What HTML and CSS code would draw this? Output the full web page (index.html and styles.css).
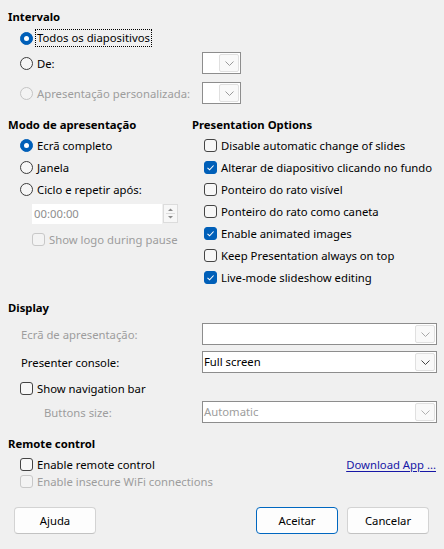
FILE: index.html
```html
<!DOCTYPE html>
<html lang="pt">
<head>
<meta charset="utf-8">
<link rel="stylesheet" href="styles.css">
</head>
<body>
<div class="dlg">
  <div class="title">Intervalo</div>
  <div class="srow r1">
    <label class="opt"><span class="radio on"></span><span class="focus">Todos os diapositivos</span></label>
  </div>
  <div class="srow r2">
    <label class="opt"><span class="radio"></span>De:</label>
    <div class="combo small"><span class="cbtn"><svg width="9" height="5" viewBox="0 0 9 5"><path d="M0.5 0.5 L4.5 4.5 L8.5 0.5" fill="none" stroke="#9a9a9a" stroke-width="1"/></svg></span></div>
  </div>
  <div class="srow r3">
    <label class="opt dis"><span class="radio off-dis"></span>Apresentação personalizada:</label>
    <div class="combo small"><span class="cbtn"><svg width="9" height="5" viewBox="0 0 9 5"><path d="M0.5 0.5 L4.5 4.5 L8.5 0.5" fill="none" stroke="#9a9a9a" stroke-width="1"/></svg></span></div>
  </div>

  <div class="cols">
    <div class="col left">
      <div class="title">Modo de apresentação</div>
      <label class="opt row22"><span class="radio on"></span>Ecrã completo</label>
      <label class="opt row22"><span class="radio"></span>Janela</label>
      <label class="opt row22"><span class="radio"></span>Ciclo e repetir após:</label>
      <div class="spin">
        <span class="spinfield">00:00:00</span>
        <span class="spinbtns">
          <svg width="15" height="19" viewBox="0 0 15 19"><path d="M5 7 L7.5 4.5 L10 7 Z" fill="#8a8a8a"/><path d="M5 12 L7.5 14.5 L10 12 Z" fill="#8a8a8a"/><path d="M3 9.5 H12" stroke="#dcdcdc" stroke-width="1"/></svg>
        </span>
      </div>
      <label class="opt dis logo"><span class="check dis"></span>Show logo during pause</label>
    </div>
    <div class="col right">
      <div class="title">Presentation Options</div>
      <label class="opt row22"><span class="check"></span>Disable automatic change of slides</label>
      <label class="opt row22"><span class="check on"><svg width="13" height="13" viewBox="0 0 13 13"><path d="M3.5 6.8 L5.6 8.8 L9.6 4.5" fill="none" stroke="#fff" stroke-width="1.1"/></svg></span>Alterar de diapositivo clicando no fundo</label>
      <label class="opt row22"><span class="check"></span>Ponteiro do rato visível</label>
      <label class="opt row22"><span class="check"></span>Ponteiro do rato como caneta</label>
      <label class="opt row22"><span class="check on"><svg width="13" height="13" viewBox="0 0 13 13"><path d="M3.5 6.8 L5.6 8.8 L9.6 4.5" fill="none" stroke="#fff" stroke-width="1.1"/></svg></span>Enable animated images</label>
      <label class="opt row22"><span class="check"></span>Keep Presentation always on top</label>
      <label class="opt row22"><span class="check on"><svg width="13" height="13" viewBox="0 0 13 13"><path d="M3.5 6.8 L5.6 8.8 L9.6 4.5" fill="none" stroke="#fff" stroke-width="1.1"/></svg></span>Live-mode slideshow editing</label>
    </div>
  </div>

  <div class="title t-display">Display</div>
  <div class="drow d1">
    <span class="dlabel dis">Ecrã de apresentação:</span>
    <div class="combo wide"><span class="cval"></span><span class="cbtn"><svg width="9" height="5" viewBox="0 0 9 5"><path d="M0.5 0.5 L4.5 4.5 L8.5 0.5" fill="none" stroke="#a8a8a8" stroke-width="1"/></svg></span></div>
  </div>
  <div class="drow d2">
    <span class="dlabel">Presenter console:</span>
    <div class="combo wide"><span class="cval">Full screen</span><span class="cbtn"><svg width="9" height="5" viewBox="0 0 9 5"><path d="M0.5 0.5 L4.5 4.5 L8.5 0.5" fill="none" stroke="#444" stroke-width="1"/></svg></span></div>
  </div>
  <label class="opt navrow"><span class="check"></span>Show navigation bar</label>
  <div class="drow d4">
    <span class="dlabel dis indent">Buttons size:</span>
    <div class="combo wide"><span class="cval dis">Automatic</span><span class="cbtn"><svg width="9" height="5" viewBox="0 0 9 5"><path d="M0.5 0.5 L4.5 4.5 L8.5 0.5" fill="none" stroke="#b0b0b0" stroke-width="1"/></svg></span></div>
  </div>

  <div class="title t-remote">Remote control</div>
  <div class="rrow">
    <label class="opt"><span class="check"></span>Enable remote control</label>
    <a class="link" href="#">Download App ...</a>
  </div>
  <div class="rrow r-second">
    <label class="opt dis"><span class="check dis"></span>Enable insecure WiFi connections</label>
  </div>

  <div class="buttons">
    <button class="btn">Ajuda</button>
    <span class="spacer"></span>
    <button class="btn def">Aceitar</button>
    <button class="btn">Cancelar</button>
  </div>
</div>
</body>
</html>
```

FILE: styles.css
```css
* { box-sizing: border-box; }
html, body { margin: 0; padding: 0; }
body {
  background: #f0f0f0;
  font-family: "Noto Sans", "Open Sans", sans-serif;
  font-size: 11.3px;
  color: #000;
  width: 444px;
  height: 549px;
  overflow: hidden;
}
.dlg { padding: 8px 8px 0 8px; }
.title {
  font-weight: bold;
  height: 18px;
  line-height: 18px;
}
.opt {
  display: flex;
  align-items: center;
  gap: 4px;
  white-space: nowrap;
}
.dis { color: #9d9d9d; }

/* radio */
.radio {
  width: 13px; height: 13px;
  border-radius: 50%;
  border: 1px solid #3c3c3c;
  background: #f6f6f6;
  flex: none;
  position: relative;
}
.radio.on { background: #005fb8; border-color: #005fb8; }
.radio.on::after {
  content: "";
  position: absolute;
  left: 3px; top: 3px;
  width: 5px; height: 5px;
  border-radius: 50%;
  background: #fff;
}
.radio.off-dis { border-color: #c4c4c4; background: #f3f3f3; }

/* checkbox */
.check {
  width: 13px; height: 13px;
  border-radius: 3px;
  border: 1px solid #444;
  background: #f7f7f7;
  flex: none;
  display: flex;
}
.check svg { margin: -1px; }
.check.on { background: #005fb8; border-color: #005fb8; }
.check.dis { border-color: #c8c8c8; background: #f3f3f3; }

.focus { outline: 1px dotted #000; outline-offset: 0; padding: 0 1px; line-height: 16px; margin-left: -1px; }

/* section 1 rows */
.srow {
  display: grid;
  grid-template-columns: 182px 39px;
  padding-left: 12px;
  height: 22px;
  align-items: center;
}
.r1 { margin-top: 1px; }
.r2 { margin-top: 3px; }
.r3 { margin-top: 8px; }

/* combo */
.combo {
  height: 22px;
  border: 1px solid #8d8d8d;
  background: #fff;
  display: flex;
  align-items: stretch;
}
.combo .cval {
  flex: 1;
  padding-left: 1px;
  line-height: 20px;
}
.combo.small { justify-content: flex-end; }
.cbtn {
  width: 20px;
  margin: 1px;
  border: 1px solid #e0e0e0;
  background: #f9f9f9;
  border-radius: 2px;
  display: flex;
  align-items: center;
  justify-content: center;
  flex: none;
}

/* section 2 */
.cols {
  display: grid;
  grid-template-columns: 184px 1fr;
  margin-top: 12px;
}
.col { display: flex; flex-direction: column; }
.row22 { height: 22px; padding-left: 12px; }
.right .row22 { padding-left: 12px; }
.spin {
  display: flex;
  margin-left: 24px;
  margin-top: 4px;
  height: 20px;
}
.spinfield {
  width: 130px;
  background: #fff;
  color: #8e8e8e;
  padding-left: 2px;
  line-height: 20px;
}
.spinbtns {
  margin-left: 1px;
  width: 15px;
  height: 19px;
  border: 1px solid #dcdcdc;
  background: #f7f7f7;
  display: flex;
}
.spinbtns svg { margin: -1px; }
.logo { margin-left: 24px; margin-top: 8px; height: 14px; }

/* display */
.t-display { margin-top: 11px; }
.drow {
  display: grid;
  grid-template-columns: 181px 235px;
  padding-left: 13px;
  height: 22px;
  align-items: center;
}
.d1 { margin-top: 6px; }
.d2 { margin-top: 6px; }
.d4 { margin-top: 2px; }
.indent { padding-left: 23px; }
.navrow { height: 22px; padding-left: 12px; margin-top: 4px; }

/* remote */
.t-remote { margin-top: 12px; }
.rrow {
  display: flex;
  align-items: center;
  justify-content: space-between;
  height: 17px;
  padding-left: 12px;
  padding-right: 0;
}
.t-remote + .rrow { margin-top: 3px; }
.link {
  color: #1717a6;
  text-decoration: underline;
  text-underline-offset: 2px;
}

/* buttons */
.buttons {
  display: flex;
  margin-top: 17px;
  padding-left: 6px;
  padding-right: 7px;
  gap: 9px;
}
.spacer { flex: 1; }
.btn {
  width: 82px;
  height: 27px;
  font: inherit;
  color: #000;
  background: #fdfdfd;
  border: 1px solid #d3d3d3;
  border-bottom-color: #c2c2c2;
  border-radius: 4px;
  padding: 0;
}
.btn.def { border-color: #0067c0; }
```
